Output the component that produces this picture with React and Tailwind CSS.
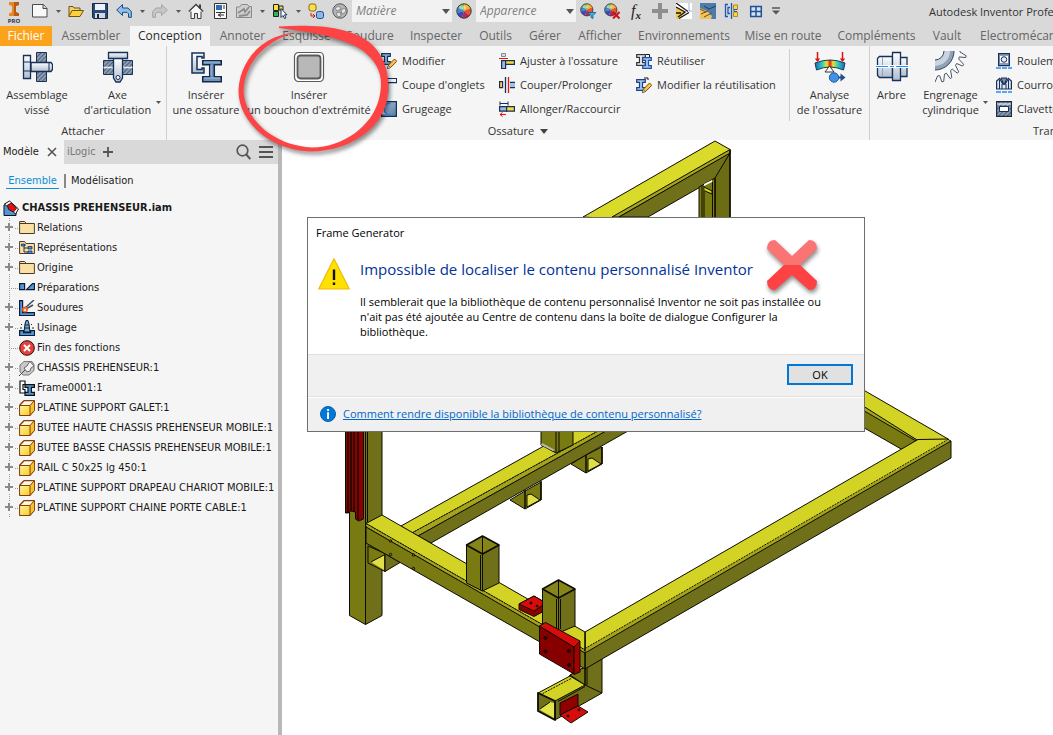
import React from "react";

const Svg = ({ s = 16, vb, className = "", children }) => (
  <svg width={s} height={s} viewBox={vb || `0 0 ${s} ${s}`} className={`block shrink-0 ${className}`} aria-hidden="true">
    {children}
  </svg>
);

/* ---------- Quick access toolbar icons ---------- */
const NewIcon = () => (
  <Svg>
    <path d="M1 1.500h10.500l3.500 4v8.500H0.500V1.500z" fill="#f8f8f8" stroke="#4a4a4a" />
    <path d="M11 1.500v4h4" fill="#d0d0d0" stroke="#4a4a4a" />
  </Svg>
);
const OpenIcon = () => (
  <Svg>
    <path d="M1 13V3.500h4l1 1.500h6v3" fill="#f3d46b" stroke="#6d5313" />
    <path d="M0.800 13.500L4 7.500h11.500L12 13.500z" fill="#fbd03b" stroke="#6d5313" />
  </Svg>
);
const SaveIcon = () => (
  <Svg>
    <path d="M0.500 0.500h15v15h-14l-1-1z" fill="#2b4a78" stroke="#14284a" />
    <path d="M3 1h10v6H3z" fill="#eef1f5" />
    <path d="M3 10h10v5H3z" fill="#d4d9e0" />
    <path d="M5 11h2v4H5z" fill="#14284a" />
  </Svg>
);
const UndoIcon = ({ off }) => (
  <Svg>
    <path
      d="M6.500 1.500L.7 7l5.800 5.500V9.300h4.500l1.500 1.500v3.500h2.800V8.500L12 5H6.500z"
      fill={off ? "#c6c6c6" : "#8fc0ea"}
      stroke={off ? "#a5a5a5" : "#1c4a80"}
      transform={off ? "matrix(-1 0 0 1 16 0)" : undefined}
    />
  </Svg>
);
const HomeIcon = () => (
  <Svg>
    <path d="M3 8v7.500h3.500v-5h3v5H13V8" fill="#f7f7f7" stroke="#3d3d3d" />
    <path d="M0.800 8.500L8 1.500l7.200 7" fill="#f7f7f7" stroke="#3d3d3d" strokeWidth="1.300" />
    <path d="M12 1.500v4" stroke="#3d3d3d" strokeWidth="2" />
  </Svg>
);
const PanelIcon = () => (
  <Svg>
    <path d="M2.500 0.500h12v15h-12z" fill="#fafafa" stroke="#333" />
    <path d="M4 2h6v5H4z" fill="#2f6cb0" />
    <path d="M11 3h2M11 5h2M4 9.500h9M7 12h5M9 10.500L6 12l3 1.500" stroke="#333" fill="none" />
  </Svg>
);
const UpdateIcon = () => (
  <Svg>
    <path d="M.5 4h3l2-2.500h6l1.500 2h2.500v11H.5z" fill="#cfcfcf" stroke="#8b8b8b" />
    <path d="M2 10l6-4 1 3 4-5M3 13l8-1 3-4" stroke="#8b8b8b" strokeWidth="1.800" fill="none" />
  </Svg>
);
const SelectIcon = () => (
  <Svg>
    <path d="M1.500 1.500h5v6h-5z" fill="#fbe04a" stroke="#222" />
    <path d="M7 3h4v4H7z" fill="#fbe04a" stroke="#222" />
    <path d="M1.500 8.500h5v5h-5z" fill="#32b54b" stroke="#222" />
    <path d="M9 5.500v9l2-2 1.500 3 1.500-.7-1.500-3H15z" fill="#fff" stroke="#14335e" />
  </Svg>
);
const LinkPartsIcon = () => (
  <Svg>
    <rect x="1" y="1" width="7" height="7" rx="2" fill="#fbe04a" stroke="#8c6a06" />
    <rect x="8.500" y="8.500" width="7" height="7" rx="2" fill="#8ab8ea" stroke="#1e4b8f" />
    <path d="M3 10v3h3M5 11l2 2-2 2" stroke="#d11" fill="none" />
  </Svg>
);
const SphereIcon = () => (
  <Svg>
    <circle cx="8" cy="8" r="7.200" fill="#b5b5b5" stroke="#555" />
    <path d="M3 5l4-2 2 3-4 2zM9 7l4-2 1 4-4 2zM4 10l4-1 1 4-3 1z" fill="#e6e6e6" stroke="#777" strokeWidth=".8" />
  </Svg>
);
const Wheel = () => (
  <g>
    <path d="M8 8V0.800A7.200 7.200 0 0 1 14.500 5z" fill="#f2b632" />
    <path d="M8 8l6.500-3a7.200 7.200 0 0 1-1 7.500z" fill="#e2572c" />
    <path d="M8 8l5.500 4.500A7.200 7.200 0 0 1 6 15z" fill="#b8265c" />
    <path d="M8 8l-2 7A7.200 7.200 0 0 1 1 10z" fill="#3a49b8" />
    <path d="M8 8l-7 2a7.200 7.200 0 0 1 1.500-6.500z" fill="#3b8ad0" />
    <path d="M8 8L2.500 3.500A7.200 7.200 0 0 1 8 .8z" fill="#67b345" />
    <circle cx="8" cy="8" r="7.200" fill="none" stroke="#3d3d3d" />
    <ellipse cx="6.500" cy="4.500" rx="3.500" ry="2" fill="#fff" opacity=".45" />
  </g>
);
const WheelIcon = () => (
  <Svg>
    <Wheel />
  </Svg>
);
const WheelDown = () => (
  <Svg>
    <g transform="scale(.85)">
      <Wheel />
    </g>
    <path d="M8 9.500h8l-3 3v3l-2-1v-2z" fill="#35b4e8" stroke="#125a86" strokeWidth=".8" />
  </Svg>
);
const WheelClear = () => (
  <Svg>
    <g transform="scale(.85)">
      <Wheel />
    </g>
    <path d="M9 9l6.500 6.500M15.500 9L9 15.500" stroke="#cf1111" strokeWidth="2" />
  </Svg>
);
const FxIcon = () => (
  <span className="font-['Liberation_Serif',serif] text-[16px] leading-4 italic text-[#1f1f1f]">
    f<sub className="text-[11px] font-bold">x</sub>
  </span>
);
const PlusBig = () => (
  <Svg>
    <path d="M8 0v16M0 8h16" stroke="#8e8e8e" strokeWidth="4" />
  </Svg>
);
const IsoA = () => (
  <Svg>
    <path d="M0 0h16v16H0z" fill="#fff" />
    <path d="M0 4l10 5-7 7H0z" fill="#f2c94b" />
    <path d="M0 0l12 8.500M0 4l9 5-7 5M3 15.500l10-6M0 10h5" stroke="#161616" fill="none" strokeWidth="1.300" />
    <path d="M13 0v8h3" stroke="#9bb3dd" fill="none" />
  </Svg>
);
const IsoB = () => (
  <Svg>
    <path d="M0 0h16v16H0z" fill="#4c7cab" />
    <path d="M0 5l7 3 5 5-1 3H0z" fill="#efc45e" />
    <path d="M0 6l6 3M4 14l8-4M1 11l7-3" stroke="#7a4a12" fill="none" />
    <path d="M4 3l5 3 7-3" stroke="#223e60" fill="none" />
  </Svg>
);
const MirrorIcon = () => (
  <Svg>
    <path d="M4 1.500H1.500v12H4M6 4.500H4v6h2" stroke="#1c56b8" fill="none" strokeWidth="1.300" />
    <path d="M7.500 0v16" stroke="#1c56b8" strokeWidth="1.300" />
    <path d="M9.500 2h4v4.500h-4zM9.500 9h4v4.500h-4z" fill="#fbd83a" stroke="#a07a0a" strokeWidth=".8" />
    <path d="M13 6.500h-3v2h3" stroke="#1c56b8" fill="none" />
  </Svg>
);
const GridIcon = () => (
  <Svg>
    <path d="M2.700 3.500h10.600v10H2.700z" fill="#cfe3fa" stroke="#23508f" strokeWidth="1.500" />
    <path d="M8 3.500v10M2.700 8.500h10.600" stroke="#23508f" strokeWidth="1.500" />
  </Svg>
);
const Caret = () => (
  <svg width="5" height="3" viewBox="0 0 5 3" aria-hidden="true" className="block">
    <path d="M0 0h5L2.500 3z" fill="#555" />
  </svg>
);

/* ---------- Ribbon icons ---------- */
const Defs = () => (
  <svg width="0" height="0" className="absolute" aria-hidden="true">
    <defs>
      <linearGradient id="steel" x1="0" y1="0" x2="0" y2="1">
        <stop offset="0" stopColor="#fff" />
        <stop offset="1" stopColor="#aebdcd" />
      </linearGradient>
      <linearGradient id="blueSteel" x1="0" y1="0" x2="1" y2="1">
        <stop offset="0" stopColor="#b9cde2" />
        <stop offset="1" stopColor="#54769c" />
      </linearGradient>
      <linearGradient id="yellowCube" x1="0" y1="0" x2="1" y2="1">
        <stop offset="0" stopColor="#fff2a0" />
        <stop offset="1" stopColor="#f6cf1f" />
      </linearGradient>
      <linearGradient id="rainbow">
        <stop offset="0" stopColor="#1768c9" />
        <stop offset=".25" stopColor="#35d1b0" />
        <stop offset=".4" stopColor="#f2e52b" />
        <stop offset=".5" stopColor="#e61b12" />
        <stop offset=".6" stopColor="#f2e52b" />
        <stop offset=".75" stopColor="#35d1b0" />
        <stop offset="1" stopColor="#1768c9" />
      </linearGradient>
      <pattern id="hatch" width="3" height="3" patternUnits="userSpaceOnUse" patternTransform="rotate(45)">
        <path d="M0 0h3v3H0z" fill="#8a9db3" />
        <path d="M0 0v3" stroke="#3a4e68" strokeWidth="1.500" />
      </pattern>
    </defs>
  </svg>
);
const BoltIcon = () => (
  <Svg s={32}>
    <path d="M15.500 1.500h10v29h-10z" fill="url(#hatch)" stroke="#1d3150" />
    <path d="M10 11.500h20l1.500 2v5l-1.500 2H10z" fill="url(#steel)" stroke="#16305a" strokeWidth="1.300" />
    <path d="M2.500 4.500h7v23h-7z" fill="url(#steel)" stroke="#16305a" strokeWidth="1.300" />
    <path d="M2.500 11h7M2.500 20h7M28 12v8" stroke="#16305a" />
  </Svg>
);
const PinIcon = () => (
  <Svg s={32}>
    <path d="M1.500 9.500h29v14h-29z" fill="url(#hatch)" stroke="#1d3150" />
    <path d="M1.500 16.500h29" stroke="#e6ebf1" strokeWidth="1.500" />
    <path d="M11.500 7h9v20l-2.500 4h-4l-2.500-4z" fill="url(#steel)" stroke="#16305a" strokeWidth="1.300" />
    <path d="M6.500 1.500h19v6h-19z" fill="url(#steel)" stroke="#16305a" strokeWidth="1.300" />
    <circle cx="16" cy="26.500" r="2" fill="#fff" stroke="#16305a" />
  </Svg>
);
const FrameIcon = () => (
  <Svg s={32}>
    <path d="M2 2h12v5h-2V5.500H7v13h5V17h2v5H2z" fill="url(#steel)" stroke="#16305a" strokeWidth="1.500" />
    <path d="M12.700 9.700h18.600v4h-7v12h7v5H12.700v-5h7v-12h-7z" fill="#6d93ba" stroke="#14294b" strokeWidth="1.500" />
    <path d="M14 11h16M14 27h16M21 14v11" stroke="#a6c1dd" />
  </Svg>
);
const CapIcon = () => (
  <Svg s={32}>
    <rect x="1.500" y="1.500" width="29" height="29" rx="4" fill="#fff" stroke="#5a5a5a" strokeWidth="1.200" />
    <rect x="4.500" y="4.500" width="23" height="23" rx="3" fill="#b8b8b8" stroke="#5a5a5a" strokeWidth="1.800" />
  </Svg>
);
const AnalyseIcon = () => (
  <Svg s={32}>
    <path d="M1 12Q16 6 31 12l-1.500 7Q16 13 2.500 19z" fill="url(#rainbow)" stroke="#163a5e" />
    <path d="M3.500 1v9M28.500 1v9" stroke="#e01212" strokeWidth="1.500" />
    <path d="M.8 7.500h5.400L3.500 11zM25.800 7.500h5.400L28.500 11z" fill="#e01212" />
    <path d="M15.500 15l4.500 6h-9z" fill="#fff" stroke="#333" />
    <path d="M22 26.500h6" stroke="#1f4f8c" strokeWidth="2" />
    <path d="M26.500 22.500l5 4-5 4z" fill="#1f4f8c" />
    <circle cx="20" cy="26.500" r="4.700" fill="#3f92e6" stroke="#1d5aa0" />
  </Svg>
);
const ShaftIcon = () => (
  <Svg s={32}>
    <path d="M1.500 7.500l2-2h13v21h-13l-2-2z" fill="url(#steel)" stroke="#16305a" strokeWidth="1.300" />
    <path d="M22 6.500h9v19h-9z" fill="url(#steel)" stroke="#16305a" strokeWidth="1.300" />
    <path d="M16.500 1.500h8v28h-8z" fill="url(#steel)" stroke="#16305a" strokeWidth="1.300" />
    <path d="M6.500 6v20" stroke="#8fa3b8" />
    <path d="M0 15.500h32" stroke="#fff" strokeWidth="3" />
    <path d="M0 15.500h32" stroke="#1e8dff" strokeWidth="1.200" strokeDasharray="12 2 4 2" />
  </Svg>
);
const gearTeeth = (() => {
  const pts = [];
  const teeth = 22;
  for (let i = 0; i < teeth; i++) {
    const a = (i / teeth) * Math.PI * 2 + 0.04;
    [
      [0, 25],
      [0.11, 31.5],
      [0.17, 31.5],
      [0.2, 25],
    ].forEach(([d, r]) => pts.push(`${(Math.cos(a + d) * r).toFixed(1)} ${(Math.sin(a + d) * r).toFixed(1)}`));
  }
  return `M${pts.join("L")}z`;
})();
const GearIcon = () => (
  <Svg s={32}>
    <path d={gearTeeth} fill="#fafbfc" stroke="#4a5462" />
    <circle cx="0" cy="0" r="19" fill="#8fa2b8" stroke="#33425a" />
    <circle cx="0" cy="0" r="15" fill="#c9d4e0" />
    <circle cx="0" cy="0" r="9" fill="#f5f5f5" stroke="#33425a" />
  </Svg>
);
const IBeam = ({ x = 0, y = 0, c = "#16305a", f = "#8fb0d4" }) => (
  <path
    transform={`translate(${x} ${y})`}
    d="M.7.700h8.600v2.600H6.500v5.400h2.800v2.600H.7V8.700h2.800V3.300H.7z"
    fill={f}
    stroke={c}
    strokeWidth="1.200"
  />
);
const Pencil = () => (
  <g>
    <path d="M6.500 15.500l1-3.500 6-6 2.300 2.300-6 6z" fill="#f6c24a" stroke="#7c4a10" />
    <path d="M6.500 15.500l1-3 2 2z" fill="#fff" stroke="#444" strokeWidth=".6" />
  </g>
);
const ModifyIcon = () => (
  <Svg>
    <IBeam />
    <Pencil />
  </Svg>
);
const MiterIcon = () => (
  <Svg>
    <path d="M.6 1.600h14.800v4H6.600v9.800h-6z" fill="url(#blueSteel)" stroke="#16305a" strokeWidth="1.200" />
    <path d="M1 2h14v3H5z" fill="#eef2f6" />
  </Svg>
);
const NotchIcon = () => (
  <Svg>
    <path d="M.6.600h14.800v14.800H.6z" fill="url(#blueSteel)" stroke="#16305a" strokeWidth="1.200" />
    <path d="M0 3h4v10H0z" fill="#f4f4f4" />
    <path d="M9.500 2.500H6.500L3.500 5v6l3 2.500h3" fill="none" stroke="#1e8dff" strokeWidth="1.300" />
  </Svg>
);
const TrimFrameIcon = () => (
  <Svg>
    <path d="M2.500.5h4v3h-4z" fill="#ddd" stroke="#888" />
    <path d="M0 5.500h9" stroke="#e01212" />
    <path d="M2.600 7.600h4v8h-4z" fill="#9fb9d6" stroke="#16305a" strokeWidth="1.200" />
    <path d="M6.600 7.600h8.800v3.800H6.600z" fill="#fbd83a" stroke="#16305a" strokeWidth="1.200" />
  </Svg>
);
const TrimExtendIcon = () => (
  <Svg>
    <path d="M.6 4.600h3v6h-3z" fill="#fbd83a" stroke="#16305a" strokeWidth="1.200" />
    <path d="M6.500 0v16" stroke="#16305a" strokeWidth="1.300" />
    <path d="M9.500 0v16" stroke="#e01212" strokeWidth="1.300" />
    <path d="M16 5.500h-5M16 10.500h-5" stroke="#16305a" strokeWidth="1.300" />
    <path d="M11 6.500h5v3.500h-5z" fill="#9fc0e6" />
  </Svg>
);
const LengthenIcon = () => (
  <Svg>
    <path d="M1 2.500h8M1 .5v4M9 .5v4" stroke="#16305a" />
    <path d="M.6 5.600h7v4.500h-7z" fill="#9fb9d6" stroke="#16305a" strokeWidth="1.200" />
    <path d="M7.600 5.600h7.800v4.500H7.600z" fill="#fbd83a" stroke="#16305a" strokeWidth="1.200" />
    <path d="M1 13.500h6M3.500 11.500l-2.500 2 2.500 2" stroke="#e01212" fill="none" />
  </Svg>
);
const ReuseIcon = () => (
  <Svg>
    <IBeam y={1} c="#333" f="#f2f2f2" />
    <IBeam x={6} y={4} c="#1c4fa8" f="#a9c9ef" />
    <path d="M10 1.500h3.500V4" stroke="#111" fill="none" />
  </Svg>
);
const ReuseEditIcon = () => (
  <Svg>
    <IBeam y={2} c="#1c3f88" f="#a9c9ef" />
    <path d="M8 1h4v2" stroke="#111" fill="none" />
    <Pencil />
  </Svg>
);
const BearingIcon = () => (
  <Svg>
    <path d="M2.600.600h10.800v12H2.600z" fill="#8d9eb2" stroke="#16305a" strokeWidth="1.200" />
    <path d="M4 3h8v7H4z" fill="#fff" />
    <circle cx="8" cy="6.500" r="2.800" fill="#e6ebf1" stroke="#16305a" />
    <path d="M0 15h16" stroke="#1e8dff" strokeWidth="1.500" strokeDasharray="5 1" />
  </Svg>
);
const BeltIcon = () => (
  <Svg>
    <path d="M.6 12V4l3-2.500 3 5 1.400-4 1.400 4 3-5 3 2.500v8z" fill="#dfe6ee" stroke="#16305a" strokeWidth="1.200" />
    <path d="M3.500 3v9M12.500 3v9M6 7v5M10 7v5" stroke="#16305a" />
    <path d="M5 1h6L8 8z" fill="#7b8fa6" stroke="#16305a" />
    <path d="M0 15h16" stroke="#1e8dff" strokeWidth="1.500" strokeDasharray="5 1" />
  </Svg>
);
const KeyIcon = () => (
  <Svg>
    <path d="M.6.600h14.800v14.800H.6z" fill="url(#hatch)" stroke="#1b2a3d" strokeWidth="1.200" />
    <path d="M3.500 5.500h9v5h-9z" fill="#fff" stroke="#16305a" />
    <path d="M1 3h14" stroke="#fff" />
  </Svg>
);

/* ---------- Browser tree icons ---------- */
const FolderShape = () => <path d="M.6 13.500v-12h5l1.500 2h8.300v10z" fill="#fbe0a6" stroke="#4a3c22" />;
const FolderIcon = () => (
  <Svg>
    <FolderShape />
    <path d="M1 3.500h6" stroke="#4a3c22" />
  </Svg>
);
const RepsIcon = () => (
  <Svg>
    <FolderShape />
    <path d="M3 5h4M5 6v6h5M5 8h4" stroke="#16305a" fill="none" />
    <path d="M2.500 4h3v2h-3zM9 6.500h4v2.500H9zM9 11h4v2.500H9z" fill="#4a90e0" stroke="#16305a" strokeWidth=".8" />
  </Svg>
);
const PrepIcon = () => (
  <Svg>
    <path d="M.6 3.600h5v6h-5zM7.500 9.600l6-6h2v6z" fill="#4f97da" stroke="#0c1c33" strokeWidth="1.200" />
  </Svg>
);
const WeldIcon = () => (
  <Svg>
    <path d="M.6.600h3v12h12v3H.6z" fill="#4f97da" stroke="#0c1c33" strokeWidth="1.200" />
    <path d="M6 8l9-8M7 9l7-4" stroke="#3d4c60" strokeWidth="1.500" />
    <circle cx="6" cy="9.500" r="3" fill="#f3602a" />
    <circle cx="6" cy="10" r="1.300" fill="#ffd9b0" />
  </Svg>
);
const MachineIcon = () => (
  <Svg>
    <path d="M.6 10.600h4v2h7v-2h4v5H.6z" fill="#4f97da" stroke="#0c1c33" strokeWidth="1.200" />
    <path d="M6 4l1-3.500h2L10 4l1 8H5z" fill="#6fa8dc" stroke="#0c1c33" />
    <path d="M6 5h4M5.500 8h5M2 4l1 1M13 4l-1 1M1 8h2M13 8h2" stroke="#222" />
  </Svg>
);
const EndIcon = () => (
  <Svg>
    <circle cx="8" cy="8" r="7.300" fill="#e8413c" stroke="#2b0b0b" />
    <path d="M5 5l6 6M11 5l-6 6" stroke="#fff" strokeWidth="2" />
  </Svg>
);
const PinnedIcon = () => (
  <Svg>
    <path d="M1 5l4-3.500h8l2 3v6l-5 4.500H4l-3-3z" fill="#c9c9c9" stroke="#777" />
    <path d="M0 16l6-6" stroke="#444" />
    <path d="M5 8l3 4 3-1 1-3 3-2-4-4.500L9 4 8 6z" fill="#f2f2f2" stroke="#666" />
  </Svg>
);
const FrameSmall = () => (
  <Svg>
    <path d="M1 1h5v3.500H4v5h2V13H1z" fill="#fff" stroke="#111" strokeWidth="1.200" />
    <path d="M6 4.600h9.400v2.800h-3v5h3v3H6v-3h3v-5H6z" fill="#4f97da" stroke="#111" strokeWidth="1.200" />
  </Svg>
);
const CubeIcon = () => (
  <Svg>
    <path d="M.7 5.300L5 .7h10.300v9.600l-4.300 5H.7z" fill="#fffbe6" stroke="#8a3c06" strokeWidth="1.300" strokeLinejoin="round" />
    <path d="M1.300 5.800h9.500v9H1.300z" fill="url(#yellowCube)" />
    <path d="M11 5.500l4-4.300v9L11 14.800z" fill="#f4c22a" />
    <path d="M1 5.500h10v9.500M11 5.500l4-4.500" stroke="#8a3c06" fill="none" />
  </Svg>
);
const AsmIcon = () => (
  <Svg>
    <path d="M1 5v10.500h12V12L6 8 4 3z" fill="#4f97da" stroke="#111" />
    <path d="M1.500 4l5-3 9 8-3 5z" fill="#fff" stroke="#111" />
    <path d="M4.500 5L8.500 3l5 5.500-3 3.500-5-2.500z" fill="#e80e0e" stroke="#111" strokeWidth=".8" />
  </Svg>
);

/* ---------- Data ---------- */
const quick = [
  ["Nouveau", NewIcon, true],
  ["Ouvrir", OpenIcon],
  ["Enregistrer", SaveIcon],
  ["Annuler", UndoIcon, true],
  ["Rétablir", () => <UndoIcon off />, true],
  ["Accueil", HomeIcon],
  ["Projets", PanelIcon],
  ["Mise à jour", UpdateIcon, true],
  ["Sélection", SelectIcon, true],
  ["Remplacer", LinkPartsIcon],
  ["Matériau", SphereIcon],
];
const quickEnd = [
  ["Ajuster", WheelDown],
  ["Effacer", WheelClear],
  ["Paramètres", FxIcon],
  ["Ajouter", PlusBig],
  ["Vue A", IsoA],
  ["Vue B", IsoB],
  ["Symétrie", MirrorIcon],
  ["Grille", GridIcon],
];
const tabs = [
  ["Fichier", "w-[52px] bg-[#fca31c] text-white"],
  ["Assembler", "w-[78px]"],
  ["Conception", "w-[80px] bg-[#f5f5f5] text-[#2b2b2b]"],
  ["Annoter", "w-[65px]"],
  ["Esquisse", "w-[63px]"],
  ["Soudure", "w-[64px]"],
  ["Inspecter", "w-[68px]"],
  ["Outils", "w-[51px]"],
  ["Gérer", "w-[48px]"],
  ["Afficher", "w-[62px]"],
  ["Environnements", "w-[106px]"],
  ["Mise en route", "w-[92px]"],
  ["Compléments", "w-[95px]"],
  ["Vault", "w-[46px]"],
  ["Electromécanique", "px-[10px]"],
];
const tree = [
  ["Relations", FolderIcon, true],
  ["Représentations", RepsIcon, true],
  ["Origine", FolderIcon, true],
  ["Préparations", PrepIcon, false],
  ["Soudures", WeldIcon, true],
  ["Usinage", MachineIcon, true],
  ["Fin des fonctions", EndIcon, false],
  ["CHASSIS PREHENSEUR:1", PinnedIcon, true],
  ["Frame0001:1", FrameSmall, true],
  ["PLATINE SUPPORT GALET:1", CubeIcon, true],
  ["BUTEE HAUTE CHASSIS PREHENSEUR MOBILE:1", CubeIcon, true],
  ["BUTEE BASSE CHASSIS PREHENSEUR MOBILE:1", CubeIcon, true],
  ["RAIL C 50x25 lg 450:1", CubeIcon, true],
  ["PLATINE SUPPORT DRAPEAU CHARIOT MOBILE:1", CubeIcon, true],
  ["PLATINE SUPPORT CHAINE PORTE CABLE:1", CubeIcon, true],
];

/* ---------- Pieces ---------- */
function QuickButton({ label, icon: Icon, menu }) {
  return (
    <>
      <button type="button" aria-label={label} className="flex h-[22px] w-6 shrink-0 items-center justify-center">
        <Icon />
      </button>
      {menu && (
        <button type="button" aria-label={`${label} (options)`} className="flex h-[22px] w-3 shrink-0 items-center justify-center">
          <Caret />
        </button>
      )}
    </>
  );
}

function Combo({ label }) {
  return (
    <div className="relative w-[100px] shrink-0">
      <select
        aria-label={label}
        className="block h-[22px] w-full appearance-none bg-[#f2f2f2] pl-1 text-[12px] italic leading-5 text-[#808080]"
      >
        <option>{label}</option>
      </select>
      <svg width="8" height="5" viewBox="0 0 8 5" aria-hidden="true" className="pointer-events-none absolute right-[2px] top-[9px]">
        <path d="M0 0h8L4 5z" fill="#555" />
      </svg>
    </div>
  );
}

function BigButton({ icon: Icon, lines, width, menu }) {
  return (
    <button type="button" className={`flex shrink-0 flex-col items-center gap-1 pt-[2px] ${width}`}>
      <Icon />
      <span className="whitespace-nowrap text-center leading-[15px]">
        {lines.map((l) => (
          <span key={l} className="block">
            {l}
          </span>
        ))}
      </span>
      {menu && (
        <span className="-mt-5 self-end">
          <Caret />
        </span>
      )}
    </button>
  );
}

function SmallColumn({ items, className }) {
  return (
    <div className={`shrink-0 ${className}`}>
      {items.map(([label, Icon]) => (
        <button key={label} type="button" className="flex h-6 items-center gap-[5px] whitespace-nowrap">
          <Icon />
          {label}
        </button>
      ))}
    </div>
  );
}

function Panel({ title, children, className = "", foot = "justify-center" }) {
  return (
    <section className={`flex shrink-0 flex-col border-r border-[#cfcfcf] pt-[3px] ${className}`}>
      <div className="flex h-[72px]">{children}</div>
      <div className={`flex h-[19px] items-center gap-[6px] pt-[2px] ${foot}`}>{title}</div>
    </section>
  );
}

function Ribbon() {
  return (
    <header className="overflow-hidden bg-[#d9d9d9] text-[11px] text-[#333]">
      <div className="flex h-[26px] items-start">
        <div className="flex h-[26px] w-7 shrink-0 justify-center">
          <svg width="20" height="24" viewBox="0 0 20 24" aria-label="Inventor PRO">
            <path d="M5 2h10v3l-3 1v6l3 1.500V16H5v-2.500L8 12V6L5 5z" fill="#e8872a" />
            <path d="M10 2h5v3l-3 1v6l3 1.500V16h-5z" fill="#b85c12" />
            <text x="10" y="22.500" textAnchor="middle" fontSize="6" fontWeight="700" fill="#333">
              PRO
            </text>
          </svg>
        </div>
        {quick.map(([label, icon, menu]) => (
          <QuickButton key={label} label={label} icon={icon} menu={menu} />
        ))}
        <Combo label="Matière" />
        <QuickButton label="Couleurs" icon={WheelIcon} />
        <Combo label="Apparence" />
        {quickEnd.map(([label, icon]) => (
          <QuickButton key={label} label={label} icon={icon} />
        ))}
        <button type="button" aria-label="Personnaliser" className="flex h-[22px] w-4 shrink-0 items-center justify-center">
          <svg width="8" height="8" viewBox="0 0 8 8" aria-hidden="true">
            <path d="M0 1h8" stroke="#555" strokeWidth="1.500" />
            <path d="M0 3.500h8L4 7.500z" fill="#555" />
          </svg>
        </button>
        <h1 className="flex-1 whitespace-nowrap pl-[145px] text-[11px] leading-6">Autodesk Inventor Professional</h1>
      </div>
      <nav className="flex h-5 text-[12px] text-[#666]">
        {tabs.map(([label, cls]) => (
          <button key={label} type="button" className={`shrink-0 whitespace-nowrap text-center leading-5 ${cls}`}>
            {label}
          </button>
        ))}
      </nav>
      <div className="flex h-[94px] bg-[#f5f5f5]">
        <Panel title="Attacher" className="w-[167px]">
          <BigButton icon={BoltIcon} lines={["Assemblage", "vissé"]} width="w-[74px]" />
          <BigButton icon={PinIcon} lines={["Axe", "d'articulation"]} width="w-[87px]" menu />
        </Panel>
        <Panel
          className="w-[703px]"
          title={
            <>
              Ossature
              <svg width="8" height="5" viewBox="0 0 8 5" aria-hidden="true">
                <path d="M0 0h8L4 5z" fill="#444" />
              </svg>
            </>
          }
        >
          <BigButton icon={FrameIcon} lines={["Insérer", "une ossature"]} width="w-[78px]" />
          <BigButton icon={CapIcon} lines={["Insérer", "un bouchon d'extrémité"]} width="w-[128px]" />
          <SmallColumn
            className="w-[118px] pl-2"
            items={[
              ["Modifier", ModifyIcon],
              ["Coupe d'onglets", MiterIcon],
              ["Grugeage", NotchIcon],
            ]}
          />
          <SmallColumn
            className="w-[137px] pl-2"
            items={[
              ["Ajuster à l'ossature", TrimFrameIcon],
              ["Couper/Prolonger", TrimExtendIcon],
              ["Allonger/Raccourcir", LengthenIcon],
            ]}
          />
          <SmallColumn
            className="w-[162px] border-r border-[#cfcfcf] pl-2"
            items={[
              ["Réutiliser", ReuseIcon],
              ["Modifier la réutilisation", ReuseEditIcon],
            ]}
          />
          <BigButton icon={AnalyseIcon} lines={["Analyse", "de l'ossature"]} width="w-[79px]" />
        </Panel>
        <Panel title="Transmission" className="w-[240px]" foot="pl-[163px]">
          <BigButton icon={ShaftIcon} lines={["Arbre"]} width="w-[43px]" />
          <BigButton icon={GearIcon} lines={["Engrenage", "cylindrique"]} width="w-[75px]" menu />
          <SmallColumn
            className="pl-2"
            items={[
              ["Roulement", BearingIcon],
              ["Courroies", BeltIcon],
              ["Clavette", KeyIcon],
            ]}
          />
        </Panel>
      </div>
    </header>
  );
}

function Browser() {
  return (
    <aside className="w-[282px] shrink-0 overflow-hidden border-r-4 border-[#b8b8b8] bg-[#f5f5f5] font-['DejaVu_Sans_Condensed','Lato',sans-serif] text-[11px] text-[#1a1a1a]">
      <div className="flex h-6 items-center bg-[#d9d9d9]">
        <button type="button" className="flex h-6 w-16 items-center justify-between bg-[#f5f5f5] pl-[3px] pr-[7px]">
          Modèle
          <svg width="10" height="10" viewBox="0 0 10 10" aria-hidden="true">
            <path d="M1 1l8 8M9 1L1 9" stroke="#555" strokeWidth="1.600" />
          </svg>
        </button>
        <button type="button" className="w-[37px] pl-[3px] text-left text-[#777]">
          iLogic
        </button>
        <button type="button" aria-label="Ajouter un onglet" className="pl-[2px]">
          <svg width="10" height="10" viewBox="0 0 10 10" aria-hidden="true">
            <path d="M5 0v10M0 5h10" stroke="#555" strokeWidth="1.800" />
          </svg>
        </button>
        <div className="ml-auto flex items-center gap-2 pr-[5px]">
          <button type="button" aria-label="Rechercher">
            <svg width="15" height="16" viewBox="0 0 15 16" aria-hidden="true">
              <circle cx="6.500" cy="6.500" r="5.300" fill="none" stroke="#555" strokeWidth="1.700" />
              <path d="M10.300 10.500l4 4.500" stroke="#555" strokeWidth="2" />
            </svg>
          </button>
          <button type="button" aria-label="Menu">
            <svg width="14" height="12" viewBox="0 0 14 12" aria-hidden="true">
              <path d="M0 1h14M0 6h14M0 11h14" stroke="#555" strokeWidth="1.800" />
            </svg>
          </button>
        </div>
      </div>
      <div className="flex h-[34px] items-center pl-[6px]">
        <button type="button" className="w-[53px] border-b border-[#0a8fd8] text-center leading-[15px] text-[#0a8fd8]">
          Ensemble
        </button>
        <button type="button" className="ml-[5px] border-l-2 border-[#888] pl-[5px] leading-[14px]">
          Modélisation
        </button>
      </div>
      <div className="flex h-5 items-center gap-[3px] pl-[3px] font-bold">
        <AsmIcon />
        CHASSIS PREHENSEUR.iam
      </div>
      <ul>
        {tree.map(([label, Icon, open]) => (
          <li key={label} className="flex h-5 items-center whitespace-nowrap">
            <button type="button" aria-label={label} className="h-5 w-[19px] shrink-0">
              <svg width="19" height="20" viewBox="0 0 19 20" aria-hidden="true">
                <path d="M9.500 0v20M11 10.500h8" stroke="#999" strokeDasharray="1 1" />
                {open && <path d="M5 3h9v12H5z" fill="#f5f5f5" />}
                {open && <path d="M9 5v8M5 9h8" stroke="#8a8a8a" strokeWidth="2" />}
              </svg>
            </button>
            <Icon />
            <span className="pl-[2px]">{label}</span>
          </li>
        ))}
      </ul>
    </aside>
  );
}

const Y = "#d3d325";
const M = "#a3a31d";
const D = "#7a7a12";
const E = "#70701a";

function Chassis() {
  return (
    <svg
      width="771"
      height="595"
      viewBox="282 140 771 595"
      className="absolute left-0 top-0"
      role="img"
      aria-label="CHASSIS PREHENSEUR"
      stroke="#0c0c00"
      strokeLinejoin="round"
    >
      {/* upper beam and right post */}
      <path d="M583 217L715 141l15 8.500V153L619 219z" fill="#dada2a" />
      <path d="M612 217l118-67.500v4L619 217z" fill={M} />
      <path d="M619 217l111-64-14 25-68 39z" fill={E} />
      <path d="M715 178l15-25v65h-15z" fill="#6c6c12" />
      <path d="M699 187l16-9v40h-16z" fill={D} />
      <path d="M702 186v32M704 186v32M712.500 182v36M715 179v39" />
      <path d="M704 184l8-4v2l-8 4z" fill="#fff" stroke="none" />
      <path d="M704 187l8 4v3l-7-3" fill={Y} />
      <path d="M730 149.500V218" strokeWidth="1.500" />

      {/* rear right beam */}
      <path d="M860 388l89 51.500-32 .5-57-33z" fill={Y} />
      <path d="M860 404l57 36-3 2-54-31z" fill={M} />
      <path d="M860 408.500l56 32.500-14 8.500-42-24z" fill={D} />

      {/* lower tube under front corner */}
      <path d="M570 675l15-8 17-8v34l-23 13-24 14v-19z" fill={E} />
      <path d="M570 675l15 10v-18z" fill={D} />
      <path d="M538 693l32-17 15 9-30 16z" fill={Y} />
      <path d="M540 695l32-17" strokeDasharray="2 1" />
      <path d="M585 668v17l17 8M587 668v17M558 701.500l27-15" fill="none" />
      <path d="M538 693l17 8v19l-17-9z" fill={E} strokeWidth="1.800" />
      <path d="M540 710l0-1 10-7 4 1v15z" fill="#e3e34a" stroke="none" />
      <path d="M540 709l10-7" fill="none" />

      {/* long front beam */}
      <path d="M585 632l333-192.500 29-.5 4 2-366 209z" fill={Y} />
      <path d="M585 648.500L948 440l3 1.500-366 212z" fill={M} stroke="none" />
      <path d="M585 648.500L947 440" strokeDasharray="2 1" />
      <path d="M585 653l366-212v17L602 659l-17 10z" fill={E} />

      {/* rear cross beam with stub tubes */}
      <path d="M571 464l15-9 16-8v17l-16 9z" fill={D} />
      <path d="M588 471v-12l4-1 9 6z" fill="#dede48" />
      <path d="M586 455v18M602 447v17" strokeWidth="1.500" />
      <path d="M510 500l15-9 16-9v18l-16 9z" fill={D} />
      <path d="M527 507v-12l4-1 9 6z" fill="#dede48" />
      <path d="M525 490v19M541 481v19" strokeWidth="1.500" />
      <path d="M401 526l141-79 31-17h27L412 533z" fill={Y} />
      <path d="M412 533l188-103h8L418 536z" fill={M} strokeDasharray="2 1" />
      <path d="M418 536l188-105h22L431 543z" fill={E} />
      <path d="M541 430v15l15 8 17-8v-15z" fill={D} />
      <path d="M541 445l12 6 2-1-13-7z" fill="#b9b9b9" stroke="none" />
      <path d="M556 430v22M559 430v22" />

      {/* left post and rails */}
      <path d="M349.500 430v185.500l16 9V430z" fill={D} />
      <path d="M365.500 430v194.500l16.500-9V430z" fill={E} />
      <path d="M368 546v17l17 8.500v-18z" fill={D} />
      <path d="M371 562l13-7v15z" fill="#dede48" stroke="none" />
      <path d="M371 562l13-7" />
      <path d="M385 571.500v-18l15 9z" fill={E} />
      <path d="M345.500 430v83h3l2-2 5 1v7l3 2 5-2V430z" fill="#8b0000" />
      <path d="M348 430v83M351 430v81M354 430v82M358 430v90" strokeWidth="1.400" />
      <path d="M367.500 430v92" />

      {/* front left beam */}
      <path d="M366 523.500l16-8.500 203 117v18l-42-25z" fill={Y} />
      <path d="M366 523.500L543 625l42 25-1 3-218-126z" fill={M} strokeDasharray="2 1" />
      <path d="M366 527l219 126v16l-45-27-174-99z" fill={D} />
      <path d="M585 632v37" />
      {[[390.500, 541], [390.500, 554.500], [413.500, 555], [413.500, 568.500]].map(([x, y]) => (
        <circle key={`${x}-${y}`} cx={x} cy={y} r="1.200" fill={D} />
      ))}

      {/* short posts */}
      <path d="M466.500 545v38l16 8V554z" fill={D} />
      <path d="M482.500 554v37l16.500-8v-38z" fill={E} />
      <path d="M466.500 545l16-9 16.500 9-16.500 9z" fill="#85851a" strokeWidth="1.500" />
      <path d="M482.500 537v17M480.500 555v35" />
      <path d="M519 604l15-8 12 7v7l-12 6.500-15-7z" fill="#8b0000" />
      <path d="M519 604l15-8 12 7-12 8z" fill="#d90c0c" />
      <circle cx="531" cy="603" r="1" fill="#500" />
      <circle cx="537" cy="606" r="1" fill="#500" />
      <path d="M542.500 589v35l16 9V598z" fill={D} />
      <path d="M558.500 598v35l16.500-7v-37z" fill={E} />
      <path d="M542.500 589l16-9 16.500 9-16.500 9z" fill="#85851a" strokeWidth="1.500" />
      <path d="M558.500 581v17M556.500 599v30M560.500 599v30" />

      {/* red mounting plate */}
      <path d="M539.500 626l34.500 21v27l-34.500-20z" fill="#860000" />
      <path d="M539.500 626l6-3.500L580 641l-6 6z" fill="#d90c0c" />
      <path d="M574 647l6-6v31l-6 2.500z" fill="#a30000" />
      {[[545.500, 638], [545.500, 651.500], [569, 651], [569, 665]].map(([x, y]) => (
        <circle key={`${x}-${y}`} cx={x} cy={y} r="1.500" fill="#400" />
      ))}

      {/* red bracket */}
      <path d="M560 703l18-9v12l-18 9z" fill="#900000" />
      <path d="M560 715l18-9 10 6-17 11z" fill="#d90c0c" />
      <circle cx="568" cy="716" r="1" fill="#500" />
      <circle cx="579" cy="710" r="1" fill="#500" />
    </svg>
  );
}

function MessageBox() {
  return (
    <div
      role="dialog"
      aria-labelledby="dlg-title"
      className="absolute left-[25px] top-[77px] flex w-[558px] flex-col border border-[#6e6e6e] bg-white text-black"
    >
      <h2 id="dlg-title" className="px-2 pt-[7px] text-[11px] leading-4">
        Frame Generator
      </h2>
      <div className="flex h-[113px] gap-[10px] pl-[10px] pr-6 pt-[17px]">
        <svg width="32" height="32" viewBox="0 0 32 32" className="shrink-0" aria-hidden="true">
          <path d="M16 .8L31.300 31H.7z" fill="#ffe100" stroke="#f5b800" strokeWidth="1.200" strokeLinejoin="round" />
          <path d="M14.800 11.500h2.400V22h-2.400zM14.800 24.500h2.400V27h-2.400z" fill="#111" />
        </svg>
        <div className="min-w-0 flex-1">
          <p className="text-[15px] leading-[22px] text-[#003399]">Impossible de localiser le contenu personnalisé Inventor</p>
          <p className="whitespace-nowrap pt-[14px] text-[11px] leading-[15px]">
            Il semblerait que la bibliothèque de contenu personnalisé Inventor ne soit pas installée ou
            <br />
            n'ait pas été ajoutée au Centre de contenu dans la boîte de dialogue Configurer la
            <br />
            bibliothèque.
          </p>
        </div>
      </div>
      <div className="flex h-[42px] items-center justify-end border-t border-[#dfdfdf] bg-[#f0f0f0] pb-[2px] pr-[11px]">
        <button type="button" className="h-[21px] w-[66px] border-2 border-[#0078d7] bg-[#e1e1e1] text-[11px] leading-4">
          OK
        </button>
      </div>
      <div className="flex h-[35px] items-center gap-[7px] border-t border-[#dfdfdf] bg-[#f0f0f0] pl-3 text-[11px] shadow-[inset_0_1px_0_#ffffff]">
        <svg width="16" height="16" viewBox="0 0 16 16" aria-hidden="true">
          <circle cx="8" cy="8" r="7.500" fill="#0078d7" stroke="#0a5fa8" />
          <path d="M7.100 3h1.900v2H7.100zM7.100 6.300h1.900V13H7.100z" fill="#fff" />
        </svg>
        <a href="#aide" className="text-[#0066cc] underline">
          Comment rendre disponible la bibliothèque de contenu personnalisé?
        </a>
      </div>
      <svg width="62" height="66" viewBox="0 0 62 66" className="absolute left-[454px] top-[17px]" aria-hidden="true">
        <g style={{ filter: "drop-shadow(1px 3px 2px rgba(0,0,0,.45))" }}>
          <path d="M13 5l17 16L47 5q8 0 8 9L38 30H22L5 14q0-9 8-9z" fill="#fa7474" />
          <path d="M22 30h16l17 16q0 9-8 9L30 40 13 55q-8 0-8-9z" fill="#fc4242" />
        </g>
      </svg>
    </div>
  );
}

export default function App() {
  return (
    <div className="relative flex min-h-screen flex-col overflow-hidden bg-white font-['Open_Sans','Noto_Sans',sans-serif]">
      <Defs />
      <Ribbon />
      <div className="flex flex-1">
        <Browser />
        <main className="relative flex-1 overflow-hidden bg-white">
          <Chassis />
          <MessageBox />
        </main>
      </div>
      <svg
        width="170"
        height="140"
        viewBox="232 20 170 140"
        className="pointer-events-none absolute left-[232px] top-5"
        aria-hidden="true"
      >
        <path
          d="M279 26.500C316 24 350 27 369 42C386 56 391 78 387 100C381 130 348 151 312 151.500C274 151 238 124 238.500 90C240 60 262 36 294 32.500C264 42 244 64 243.500 92C246 122 276 146 312 147.500C344 147 372 126 379 99C384 78 380 64 362 50C340 36 308 32 279 28z"
          fill="#fc4444"
          style={{ filter: "drop-shadow(2px 3px 2px rgba(0,0,0,.45))" }}
        />
      </svg>
    </div>
  );
}
